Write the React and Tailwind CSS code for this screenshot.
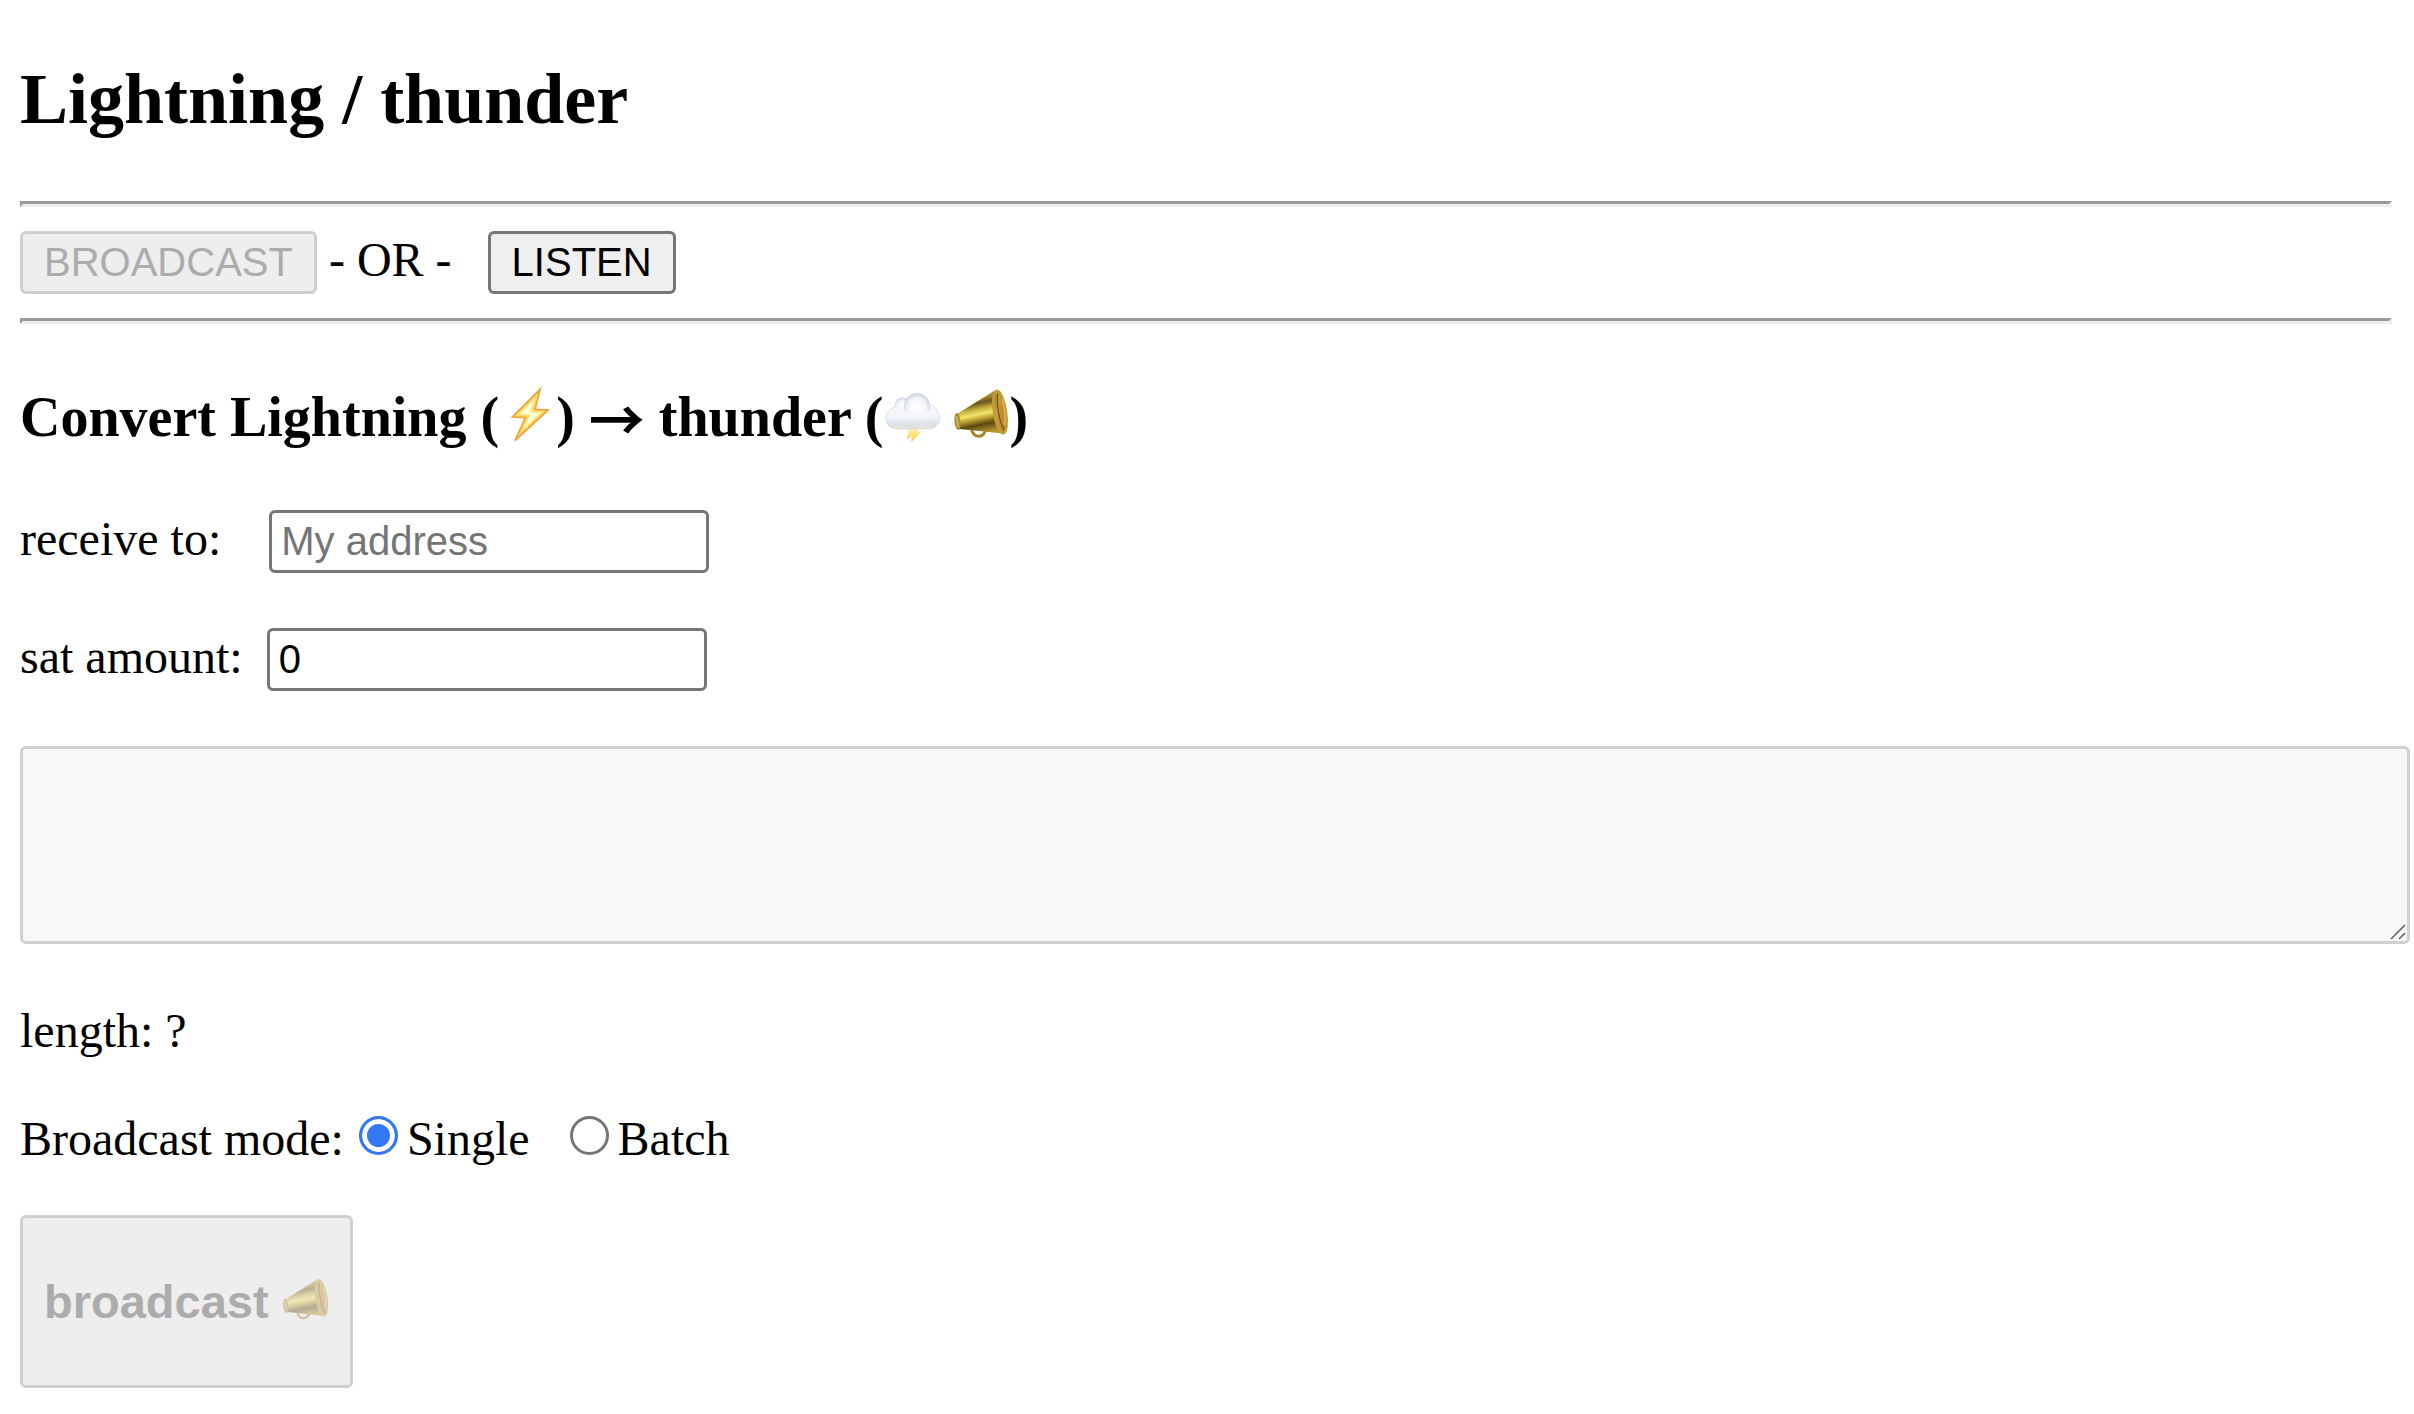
import { useId, useState } from "react";

function Bolt({ className }) {
  return (
    <svg viewBox="-2 0 57 64" className={className} role="img" aria-label="lightning">
      <path d="M39 4.5 L11.5 32 L24.5 32.5 L14 55.5 L47 25 L34 24.5 Z" fill="#ffe873" stroke="#f3a33c" strokeWidth="1.8" strokeLinejoin="miter" />
      <path d="M35 11.5 L17 30 L28 30.5 L20 47 L41.5 27 L30.5 26.5 Z" fill="#fff9b8" stroke="#fcd763" strokeWidth="1" />
      <path d="M31 17.5 L21 28.5 L31 28.8 L26 39 L36.5 28.6 L27 28 Z" fill="#fffee6" />
    </svg>
  );
}

function StormCloud({ className }) {
  const id = useId();
  return (
    <svg viewBox="-1 0 57 64" className={className} role="img" aria-label="thunder cloud">
      <defs>
        <linearGradient id={`${id}c`} x1="0" y1="0" x2="0" y2="1">
          <stop offset="0" stopColor="#f6f7fa" />
          <stop offset="0.45" stopColor="#f4f6f9" />
          <stop offset="0.85" stopColor="#dbe0e9" />
          <stop offset="1" stopColor="#e9e4d6" />
        </linearGradient>
        <radialGradient id={`${id}p`} cx="0.5" cy="0.55" r="0.5">
          <stop offset="0" stopColor="#ffffff" />
          <stop offset="0.7" stopColor="#f3f5f9" />
          <stop offset="1" stopColor="#d3d9e3" />
        </radialGradient>
        <linearGradient id={`${id}b`} x1="0" y1="0" x2="0" y2="1">
          <stop offset="0" stopColor="#fdf0c4" />
          <stop offset="0.5" stopColor="#ffe26a" />
          <stop offset="1" stopColor="#f8c75a" />
        </linearGradient>
      </defs>
      <path d="M26 43 L23 54 L28 51 L27.5 57 L37 46.5 L32 47.5 L34 43 Z" fill={`url(#${id}b)`} stroke="#f8d183" strokeWidth="0.6" />
      <path d="M13 44 C6 44 2 39.5 2 33.5 C2 27 6 23 12 22 L44 18.500 C51 21 55.500 26.500 55.500 33 C55.500 39.500 51 44 44 44 Z" fill={`url(#${id}c)`} stroke="#d3d9e3" strokeWidth="0.8" />
      <circle cx="18.500" cy="20.500" r="8" fill={`url(#${id}p)`} />
      <circle cx="33" cy="21" r="13" fill={`url(#${id}p)`} />
      <path d="M3 33 C3 26.500 8 22.500 14 22.500 C18 22.500 20.500 24 22 27 C26 23.500 32 24.500 34 28 C40 25 46 25 54.500 31 C55 38 50 42 44 42.500 L13 42.500 C7 42 3 38 3 33 Z" fill={`url(#${id}c)`} />
      <path d="M7 37 C11 42 18 41 22 38 C28 42 38 41 41 38 C45 40 50 39 52 36" fill="none" stroke="#dfe4ec" strokeWidth="1.6" />
    </svg>
  );
}

function Megaphone({ className }) {
  const id = useId();
  return (
    <svg viewBox="-2 0 57 64" className={className} role="img" aria-label="megaphone">
      <defs>
        <linearGradient id={`${id}h`} gradientUnits="userSpaceOnUse" x1="20" y1="14" x2="27" y2="48">
          <stop offset="0" stopColor="#a48a2e" />
          <stop offset="0.14" stopColor="#6c5516" />
          <stop offset="0.3" stopColor="#c3ab3c" />
          <stop offset="0.46" stopColor="#f1e766" />
          <stop offset="0.6" stopColor="#b79c30" />
          <stop offset="0.76" stopColor="#5c470d" />
          <stop offset="0.9" stopColor="#8d7322" />
          <stop offset="1" stopColor="#b3932f" />
        </linearGradient>
        <linearGradient id={`${id}m`} x1="0" y1="0" x2="1" y2="1">
          <stop offset="0" stopColor="#8a6c1c" />
          <stop offset="0.35" stopColor="#c0a03a" />
          <stop offset="0.52" stopColor="#cf8a30" />
          <stop offset="0.7" stopColor="#b08c2e" />
          <stop offset="1" stopColor="#7c5f18" />
        </linearGradient>
      </defs>
      <path d="M17.5 43 C18 54 31.500 54 31.500 43" fill="none" stroke="#a58325" strokeWidth="3" />
      <path d="M3 29 L40 6 C44 18 48 34 49.5 48.5 L5 44 Z" fill={`url(#${id}h)`} />
      <ellipse cx="3.5" cy="36.5" rx="3" ry="8.5" transform="rotate(-6 3.5 36.5)" fill="#a88c30" />
      <path d="M2.5 31 C3 35 3.5 38 4.5 42" fill="none" stroke="#dccb62" strokeWidth="1.2" />
      <ellipse cx="46" cy="27" rx="6" ry="21.5" transform="rotate(-9 46 27)" fill={`url(#${id}m)`} stroke="#bfa038" strokeWidth="2.4" />
      <path d="M43.5 9 C42.500 18 45 37 50 45" fill="none" stroke="#5a440e" strokeWidth="1" />
      <path d="M48 14 C50.500 22 51.500 32 50.500 40" fill="none" stroke="#dfb85a" strokeWidth="1.4" />
    </svg>
  );
}

function Rule() {
  return <hr className="h-1.5 border-3 border-t-[#9a9a9a] border-r-[#eeeeee] border-b-[#eeeeee] border-l-[#9a9a9a]" />;
}

const button =
  "rounded-md border-3 border-[#767676] bg-[#efefef] px-[21px] font-['Liberation_Sans',Arial,sans-serif] disabled:border-[#cfcfcf] disabled:bg-[#eeeeee] disabled:text-[#acacac]";

const field =
  "h-[63px] w-[440px] rounded-md border-3 border-[#767676] bg-white px-[9px] font-['Liberation_Sans',Arial,sans-serif] text-[40px] leading-[57px] placeholder:text-[#757575]";

const radio =
  "mt-1 size-[39px] appearance-none rounded-full border-3 border-[#767676] bg-white checked:border-[#3478f6] checked:bg-[#3478f6] checked:shadow-[inset_0_0_0_5px_white]";

export default function App() {
  const [view, setView] = useState("broadcast");
  const [address, setAddress] = useState("");
  const [amount, setAmount] = useState("0");
  const [mode, setMode] = useState("single");

  return (
    <main className="min-h-screen overflow-x-hidden bg-white pt-[58px] pr-[22px] pb-6 pl-5 font-['Liberation_Serif','Times_New_Roman',serif] text-[48px] leading-[54px] text-black">
      <h1 className="mb-[61px] text-[72px] leading-[82px] font-bold">Lightning / thunder</h1>
      <Rule />
      <div className="my-6 flex h-[63px] items-baseline">
        <button type="button" disabled={view === "broadcast"} onClick={() => setView("broadcast")} className={`${button} text-[40px] leading-[57px]`}>
          BROADCAST
        </button>
        <span className="mr-9 ml-3">- OR -</span>
        <button type="button" disabled={view === "listen"} onClick={() => setView("listen")} className={`${button} text-[40px] leading-[57px]`}>
          LISTEN
        </button>
      </div>
      <Rule />

      <h3 className="mt-[61px] flex items-center gap-[14px] text-[56px] leading-[64px] font-bold">
        <span className="flex">
          Convert Lightning (<Bolt className="h-16 w-[57px]" />)
        </span>
        <span className="font-['Noto_Sans_CJK_JP',sans-serif]">→</span>
        <span className="flex">
          thunder (<StormCloud className="mr-3 h-16 w-[57px] overflow-visible" />
          <Megaphone className="h-16 w-[57px] overflow-visible" />)
        </span>
      </h3>

      <div className="mt-[61px] flex h-[63px] items-baseline gap-12">
        <label htmlFor="address">receive to:</label>
        <input id="address" type="text" placeholder="My address" value={address} onChange={(e) => setAddress(e.target.value)} className={field} />
      </div>
      <div className="mt-[55px] flex h-[63px] items-baseline gap-6">
        <label htmlFor="amount">sat amount:</label>
        <input id="amount" type="text" inputMode="numeric" value={amount} onChange={(e) => setAmount(e.target.value)} className={field} />
      </div>

      <div className="relative mt-[55px] -mr-[18px]">
        <textarea
          aria-label="invoice"
          disabled
          className="block h-[198px] w-full resize-none rounded-md border-3 border-[#d0d0d0] bg-[#f8f8f8] p-1.5 font-['Liberation_Mono',monospace] text-[40px]"
        />
        <svg viewBox="0 0 16 16" className="absolute right-1 bottom-1 size-4" aria-hidden="true">
          <path d="M1 15 L15 1 M9 15 L15 9" fill="none" stroke="#5c5c5c" strokeWidth="1.5" />
        </svg>
      </div>

      <p className="mt-[60px]">length: ?</p>

      <fieldset className="mt-[54px] flex">
        <legend className="float-left mr-[15px]">Broadcast mode:</legend>
        <label className="mr-10 flex gap-[9px]">
          <input type="radio" name="mode" value="single" checked={mode === "single"} onChange={() => setMode("single")} className={radio} />
          Single
        </label>
        <label className="flex gap-[9px]">
          <input type="radio" name="mode" value="batch" checked={mode === "batch"} onChange={() => setMode("batch")} className={radio} />
          Batch
        </label>
      </fieldset>

      <button type="button" disabled className={`${button} mt-[49px] flex h-[173px] items-center text-[47px] leading-[54px] font-bold`}>
        broadcast
        <Megaphone className="ml-3 h-[54px] w-12 opacity-40" />
      </button>
    </main>
  );
}
